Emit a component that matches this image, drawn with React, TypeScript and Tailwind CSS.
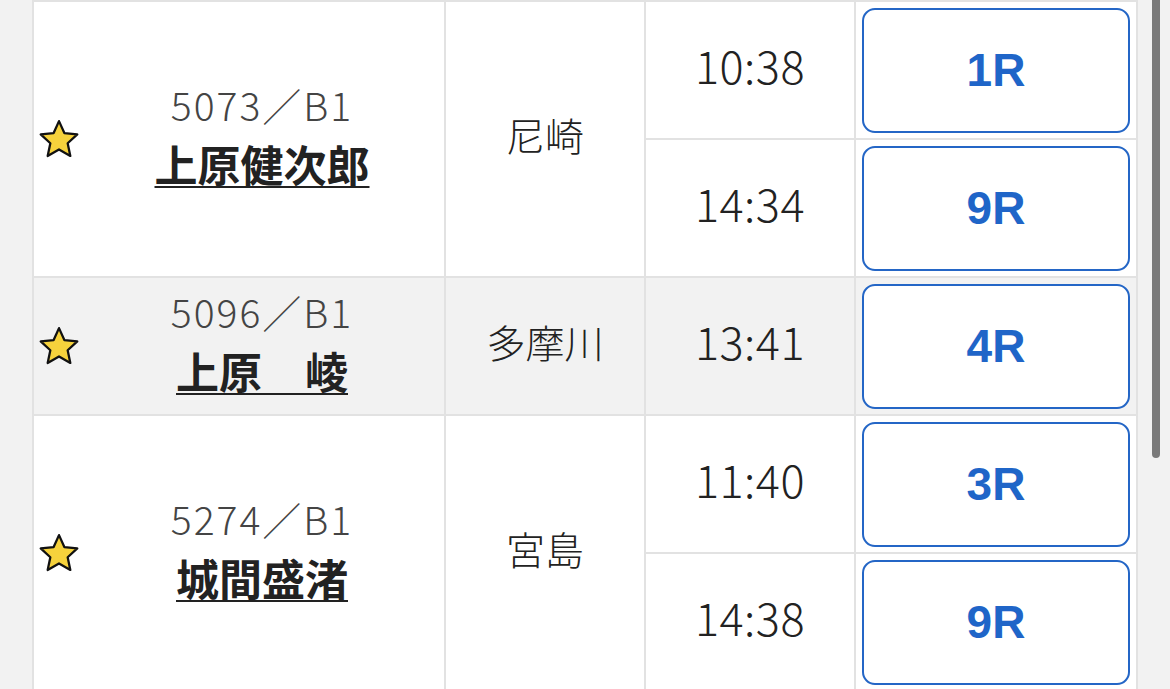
import React from 'react';

type Race = { time: string; race: string };
type Entry = { no: string; name: string; venue: string; races: Race[]; shaded?: boolean };

const entries: Entry[] = [
  { no: '5073／B1', name: '上原健次郎', venue: '尼崎', races: [{ time: '10:38', race: '1R' }, { time: '14:34', race: '9R' }] },
  { no: '5096／B1', name: '上原　崚', venue: '多摩川', races: [{ time: '13:41', race: '4R' }], shaded: true },
  { no: '5274／B1', name: '城間盛渚', venue: '宮島', races: [{ time: '11:40', race: '3R' }, { time: '14:38', race: '9R' }] },
];

const Star = () => (
  <svg width="42" height="42" viewBox="0 0 24 24" className="shrink-0">
    <polygon
      points="12,1.8 15.06,8.59 22.46,9.4 16.95,14.41 18.47,21.7 12,18 5.53,21.7 7.05,14.41 1.54,9.4 8.94,8.59"
      fill="#f6d23c"
      stroke="#111"
      strokeWidth="1.3"
      strokeLinejoin="round"
    />
  </svg>
);

const font = { fontFamily: '"Noto Sans CJK JP", "Noto Sans", sans-serif' };

export default function App() {
  return (
    <div className="min-h-screen bg-[#f2f2f2] flex" style={font}>
      <div className="w-[32px] shrink-0" />
      <div className="grid grid-cols-[410px_198px_208px_280px] auto-rows-[136px] gap-[2px] p-[2px] bg-[#e2e2e2] h-fit">
        {entries.map((e) => {
          const bg = e.shaded ? 'bg-[#f2f2f2]' : 'bg-white';
          const span = e.races.length === 2 ? 'row-span-2' : '';
          return (
            <React.Fragment key={e.no}>
              <div className={`${bg} ${span} flex items-center pl-[4px]`}>
                <Star />
                <div className="flex-1 flex flex-col items-center gap-[12px] pb-[10px]">
                  <span className="text-[39px] leading-[46px] font-light text-[#444] tracking-[2px]">{e.no}</span>
                  <span className="text-[43px] leading-[48px] font-bold text-[#222] underline decoration-2 underline-offset-[4px]">
                    {e.name}
                  </span>
                </div>
              </div>
              <div className={`${bg} ${span} flex items-center justify-center pb-[10px]`}>
                <span className="text-[39px] font-light text-[#222]">{e.venue}</span>
              </div>
              {e.races.map((r, i) => (
                <React.Fragment key={r.race + i}>
                  <div className={`${bg} flex items-center justify-center pb-[10px]`}>
                    <span className="text-[45px] font-light text-[#222] tracking-[0.5px]">{r.time}</span>
                  </div>
                  <div className={`${bg} p-[6px] pb-[5px]`}>
                    <button className="w-full h-full bg-white border-[2.5px] border-[#2466c6] rounded-[13px] flex items-center justify-center">
                      <span
                        className="text-[46px] font-bold text-[#1f65c8]"
                        style={{ fontFamily: '"Liberation Sans", Arial, sans-serif' }}
                      >
                        {r.race}
                      </span>
                    </button>
                  </div>
                </React.Fragment>
              ))}
            </React.Fragment>
          );
        })}
      </div>
      <div className="flex-1 flex pl-[14px]">
        <div className="w-[8px] h-[458px] bg-[#7a7a7a] rounded-b-full" />
      </div>
    </div>
  );
}
